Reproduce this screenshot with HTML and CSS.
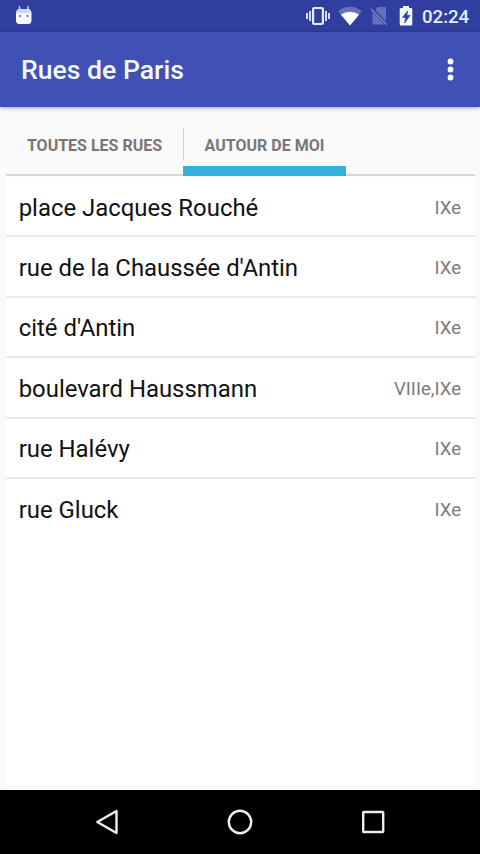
FILE: index.html
```html
<!DOCTYPE html>
<html lang="fr">
<head>
<meta charset="utf-8">
<title>Rues de Paris</title>
<link rel="stylesheet" href="styles.css">
</head>
<body>
<div class="screen">
  <div class="status">
    <svg class="robot" width="18" height="20" viewBox="0 0 18 20"><path d="M4.500 1v5M13 1v5" stroke="#c3cff5" stroke-width="1.500"/><path d="M1 8.500Q1 4 5 4h7.500q4 0 4 4.500v7q0 3.500-3.500 3.500H4.500Q1 19 1 15.500z" fill="#f4f7ff"/><path d="M2 6.500Q4 4 8.700 4t6.800 2.500V8H2z" fill="#cdd9fa"/><circle cx="5" cy="11" r="1" fill="#555b70"/><circle cx="12.500" cy="11" r="1" fill="#555b70"/></svg>
    <div class="status-right">
      <svg width="24" height="20" viewBox="0 0 24 20"><rect x="7.100" y="2" width="9.800" height="16" rx="1" fill="none" stroke="#e6ecff" stroke-width="2.200"/><path d="M1 7v6M4 5v10M20 5v10M23 7v6" stroke="#dfe6ff" stroke-width="1.900"/></svg>
      <svg class="wifi" width="24" height="20" viewBox="0 0 24 20"><path d="M0 5Q12-3.500 24 5L12 19.500z" fill="#6470b9"/><path d="M2.800 8.500Q12 3 21.200 8.500L12 19.500z" fill="#fff"/></svg>
      <svg class="sim" width="18" height="20" viewBox="0 0 18 20"><path d="M7.500 1H15q1 0 1 1v13.500L5.500 4zM2.500 6v11.500q0 1 1 1h10.800z" fill="#6672b8"/><path d="M.8 2.800l16 16" stroke="#7883c4" stroke-width="1.600"/></svg>
      <svg class="battery" width="14" height="20" viewBox="0 0 14 20"><path d="M4 0h6v2h2q1.300 0 1.300 1.300v15q0 1.200-1.300 1.200H2Q.7 19.500.7 18.300v-15Q.7 2 2 2h2z" fill="#f4f7ff"/><path d="M8.500 5L3.500 11.500h3.200L5.500 17l5.500-7.500H7.800z" fill="#303f9f" stroke="#303f9f" stroke-width=".7"/></svg>
      <span class="clock">02:24</span>
    </div>
  </div>
  <header class="bar">
    <h1>Rues de Paris</h1>
    <svg width="8" height="24" viewBox="0 0 8 24"><g fill="#fff"><circle cx="4.500" cy="3.500" r="2.900"/><circle cx="4.500" cy="11.500" r="2.900"/><circle cx="4.500" cy="19.500" r="2.900"/></g></svg>
  </header>
  <nav class="tabs">
    <div class="tab first">TOUTES LES RUES</div>
    <div class="tab active">AUTOUR DE MOI</div>
  </nav>
  <ul class="list">
    <li><span class="name">place Jacques Rouché</span><span class="area">IXe</span></li>
    <li><span class="name">rue de la Chaussée d'Antin</span><span class="area">IXe</span></li>
    <li><span class="name">cité d'Antin</span><span class="area">IXe</span></li>
    <li><span class="name">boulevard Haussmann</span><span class="area">VIIIe,IXe</span></li>
    <li><span class="name">rue Halévy</span><span class="area">IXe</span></li>
    <li><span class="name">rue Gluck</span><span class="area">IXe</span></li>
  </ul>
  <footer class="nav">
    <svg width="26" height="28" viewBox="0 0 26 28"><path d="M3.300 14L22.500 3v22z" fill="none" stroke="#eee" stroke-width="2.400" stroke-linejoin="round"/></svg>
    <svg width="26" height="28" viewBox="0 0 26 28"><circle cx="13" cy="14" r="11.200" fill="none" stroke="#eee" stroke-width="2.400"/></svg>
    <svg width="26" height="28" viewBox="0 0 26 28"><rect x="3.200" y="4" width="20" height="20" rx=".5" fill="none" stroke="#eee" stroke-width="2.400"/></svg>
  </footer>
</div>
</body>
</html>
```
FILE: styles.css
```css
* { box-sizing: border-box; }
body { margin: 0; font-family: Roboto, "Liberation Sans", sans-serif; }
svg { display: block; flex: none; }
.screen {
  width: 480px;
  height: 854px;
  display: flex;
  flex-direction: column;
  background: #fafafa;
  overflow: hidden;
}
.status {
  height: 32px;
  flex: none;
  display: flex;
  justify-content: space-between;
  padding: 6px 10px 0 15px;
  background: #303f9f;
}
.robot { margin-top: -1px; }
.status-right { display: flex; }
.wifi { margin-left: 8px; }
.sim { margin-left: 8px; }
.battery { margin-left: 11px; }
.clock {
  width: 48px;
  margin-left: 9px;
  padding-top: 1px;
  font-size: 18.6px;
  font-weight: 500;
  line-height: 21px;
  color: #e8eeff;
  white-space: nowrap;
}
.bar {
  height: 75px;
  flex: none;
  display: flex;
  align-items: center;
  justify-content: space-between;
  padding: 0 26px 0 21px;
  background: #3f51b5;
  box-shadow: 0 1px 4px rgba(0, 0, 0, .35);
}
h1 {
  margin: 0;
  font-size: 26.6px;
  font-weight: 500;
  line-height: 32px;
  color: #f6f8ff;
}
.tabs {
  height: 69px;
  flex: none;
  margin: 0 5px 1px 6px;
  display: flex;
  background: linear-gradient(#d6d6d6, #d6d6d6) bottom / 100% 2.500px no-repeat;
}
.tab {
  height: 69px;
  padding-top: 28px;
  font-size: 16px;
  font-weight: 700;
  line-height: 21px;
  text-align: center;
  white-space: nowrap;
  color: #777;
}
.first {
  width: 177px;
}
.active {
  width: 163px;
  border-bottom: 10px solid #35b2dc;
  background: linear-gradient(#d2d2d2, #d2d2d2) left 21px / 1px 32px no-repeat;
}
.list {
  flex: 1;
  margin: 0 5px 5px 6px;
  padding: 0;
  list-style: none;
  background: #fff;
}
li {
  height: 60.4px;
  display: flex;
  align-items: center;
  justify-content: space-between;
  padding: 3px 14px 0 12.700px;
  border-bottom: 2px solid #e9e9e9;
}
li:last-child { border-color: transparent; }
.name { font-size: 23.900px; line-height: 30px; color: #111; }
.area { font-size: 18.600px; line-height: 24px; color: #7b7b7b; }
.nav {
  height: 64px;
  flex: none;
  display: flex;
  justify-content: space-between;
  padding: 18px 94px 0;
  background: #000;
}
```
